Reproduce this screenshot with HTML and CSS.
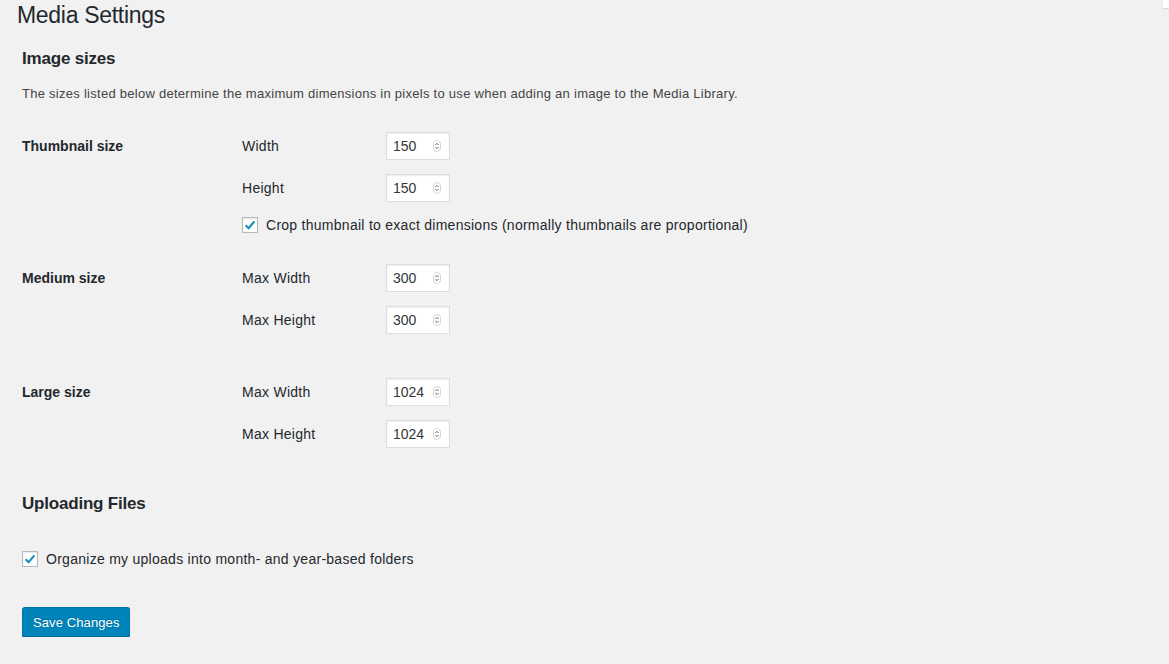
FILE: index.html
```html
<!DOCTYPE html>
<html lang="en">
<head>
  <meta charset="UTF-8" />
  <title>Media Settings</title>
  <link rel="stylesheet" href="styles.css">
</head>
<body>
  <div class="screen-tab"></div>

  <div class="wrap">
    <h1>Media Settings</h1>

    <form action="#" method="POST" class="settings">
      <!-- Image sizes -->
      <h2>Image sizes</h2>
      <p class="description">The sizes listed below determine the maximum dimensions in pixels to use when adding an image to the Media Library.</p>

      <div class="form-row row-thumb">
        <div class="row-title">Thumbnail size</div>
        <div class="fields">
          <div class="field">
            <label for="thumbW">Width</label>
            <div class="num">
              <input type="text" id="thumbW" value="150" />
              <svg class="spin" width="8" height="12" viewBox="0 0 8 12"><rect x="0.5" y="0.5" width="7" height="11" rx="3.5" fill="#fff" stroke="#d6d6d6"/><path d="M2.4 5 L4 3.4 L5.6 5 M2.4 7 L4 8.6 L5.6 7" fill="none" stroke="#555" stroke-width="0.9"/></svg>
            </div>
          </div>
          <div class="field">
            <label for="thumbH">Height</label>
            <div class="num">
              <input type="text" id="thumbH" value="150" />
              <svg class="spin" width="8" height="12" viewBox="0 0 8 12"><rect x="0.5" y="0.5" width="7" height="11" rx="3.5" fill="#fff" stroke="#d6d6d6"/><path d="M2.4 5 L4 3.4 L5.6 5 M2.4 7 L4 8.6 L5.6 7" fill="none" stroke="#555" stroke-width="0.9"/></svg>
            </div>
          </div>
          <label class="check crop">
            <span class="box"><svg width="14" height="14" viewBox="0 0 14 14"><path d="M2.6 7.2 L5.6 10.2 L11.4 3.4" fill="none" stroke="#1e8cbe" stroke-width="2.2"/></svg></span>
            Crop thumbnail to exact dimensions (normally thumbnails are proportional)
          </label>
        </div>
      </div>

      <div class="form-row row-medium">
        <div class="row-title">Medium size</div>
        <div class="fields">
          <div class="field">
            <label for="medW">Max Width</label>
            <div class="num">
              <input type="text" id="medW" value="300" />
              <svg class="spin" width="8" height="12" viewBox="0 0 8 12"><rect x="0.5" y="0.5" width="7" height="11" rx="3.5" fill="#fff" stroke="#d6d6d6"/><path d="M2.4 5 L4 3.4 L5.6 5 M2.4 7 L4 8.6 L5.6 7" fill="none" stroke="#555" stroke-width="0.9"/></svg>
            </div>
          </div>
          <div class="field">
            <label for="medH">Max Height</label>
            <div class="num">
              <input type="text" id="medH" value="300" />
              <svg class="spin" width="8" height="12" viewBox="0 0 8 12"><rect x="0.5" y="0.5" width="7" height="11" rx="3.5" fill="#fff" stroke="#d6d6d6"/><path d="M2.4 5 L4 3.4 L5.6 5 M2.4 7 L4 8.6 L5.6 7" fill="none" stroke="#555" stroke-width="0.9"/></svg>
            </div>
          </div>
        </div>
      </div>

      <div class="form-row row-large">
        <div class="row-title">Large size</div>
        <div class="fields">
          <div class="field">
            <label for="largeW">Max Width</label>
            <div class="num">
              <input type="text" id="largeW" value="1024" />
              <svg class="spin" width="8" height="12" viewBox="0 0 8 12"><rect x="0.5" y="0.5" width="7" height="11" rx="3.5" fill="#fff" stroke="#d6d6d6"/><path d="M2.4 5 L4 3.4 L5.6 5 M2.4 7 L4 8.6 L5.6 7" fill="none" stroke="#555" stroke-width="0.9"/></svg>
            </div>
          </div>
          <div class="field">
            <label for="largeH">Max Height</label>
            <div class="num">
              <input type="text" id="largeH" value="1024" />
              <svg class="spin" width="8" height="12" viewBox="0 0 8 12"><rect x="0.5" y="0.5" width="7" height="11" rx="3.5" fill="#fff" stroke="#d6d6d6"/><path d="M2.4 5 L4 3.4 L5.6 5 M2.4 7 L4 8.6 L5.6 7" fill="none" stroke="#555" stroke-width="0.9"/></svg>
            </div>
          </div>
        </div>
      </div>

      <!-- Uploading -->
      <h2 class="uploads-title">Uploading Files</h2>
      <label class="check uploads">
        <span class="box"><svg width="14" height="14" viewBox="0 0 14 14"><path d="M2.6 7.2 L5.6 10.2 L11.4 3.4" fill="none" stroke="#1e8cbe" stroke-width="2.2"/></svg></span>
        Organize my uploads into month- and year-based folders
      </label>

      <button type="submit" class="button-primary">Save Changes</button>
    </form>
  </div>
</body>
</html>
```

FILE: styles.css
```css
* {
  box-sizing: border-box;
}
body {
  margin: 0;
  background: #f1f1f1;
  color: #444;
  font-family: "Liberation Sans", Arial, sans-serif;
  font-size: 14px;
}

.screen-tab {
  position: absolute;
  top: 0;
  right: 0;
  width: 6px;
  height: 8px;
  background: #fff;
  box-shadow: 0 1px 1px rgba(0, 0, 0, 0.1);
}

.wrap {
  padding: 1px 0 0 17px;
}

h1 {
  margin: 0;
  font-size: 23px;
  font-weight: 400;
  line-height: 29px;
  letter-spacing: -0.3px;
  color: #23282d;
}

.settings {
  padding-left: 5px;
}

h2 {
  margin: 17px 0 0;
  font-size: 17px;
  font-weight: 700;
  line-height: 24px;
  letter-spacing: -0.2px;
  color: #23282d;
}

.description {
  margin: 14px 0 0;
  font-size: 13px;
  line-height: 18px;
  letter-spacing: 0.27px;
  color: #444;
}

.form-row {
  display: grid;
  grid-template-columns: 220px 1fr;
}
.row-thumb { margin-top: 29px; }
.row-medium { margin-top: 28px; }
.row-large { margin-top: 44px; }

.row-title {
  font-weight: 700;
  color: #23282d;
  line-height: 28px;
}

.fields {
  display: flex;
  flex-direction: column;
  gap: 14px;
}

.field {
  display: flex;
  align-items: center;
  height: 28px;
}
.field label {
  width: 144px;
  color: #23282d;
  letter-spacing: 0.27px;
}

.num {
  display: flex;
  align-items: center;
  width: 64px;
  height: 28px;
  background: #fff;
  border: 1px solid #ddd;
  box-shadow: inset 0 1px 2px rgba(0, 0, 0, 0.07);
}
.num input {
  width: 40px;
  border: none;
  background: transparent;
  padding: 0 0 0 6px;
  font-family: inherit;
  font-size: 14px;
  color: #32373c;
  outline: none;
}
.spin {
  margin-left: 6px;
}

.check {
  display: flex;
  align-items: center;
  gap: 8px;
  line-height: 22px;
  letter-spacing: 0.27px;
  color: #23282d;
}
.crop {
  margin-top: -2px;
}
.box {
  display: flex;
  align-items: center;
  justify-content: center;
  width: 16px;
  height: 16px;
  background: #fff;
  border: 1px solid #b4b9be;
  box-shadow: inset 0 1px 2px rgba(0, 0, 0, 0.1);
}

.uploads-title {
  margin-top: 44px;
}
.uploads {
  margin-top: 32px;
}

.button-primary {
  display: block;
  margin-top: 37px;
  height: 30px;
  padding: 0 10px;
  background: #0085ba;
  border: 1px solid #0073aa;
  border-bottom-color: #006799;
  border-radius: 3px;
  box-shadow: 0 1px 0 #006799;
  color: #fff;
  font-family: inherit;
  font-size: 13px;
  letter-spacing: 0.1px;
  text-shadow: 0 -1px 1px #006799;
  cursor: pointer;
}
```
